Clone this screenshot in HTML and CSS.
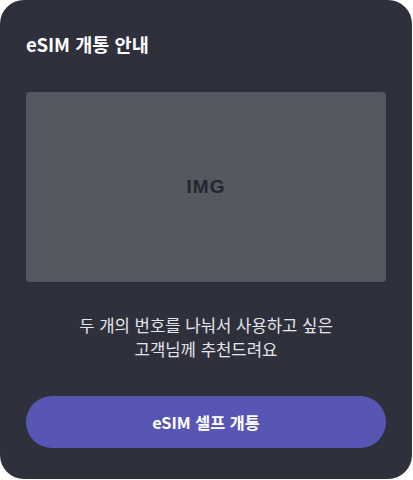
FILE: index.html
```html
<!DOCTYPE html>
<html lang="ko">
<head>
<meta charset="utf-8">
<link rel="stylesheet" href="styles.css">
</head>
<body>
<div class="card">
  <h1 class="title">eSIM 개통 안내</h1>
  <div class="img-box">IMG</div>
  <p class="desc">두 개의 번호를 나눠서 사용하고 싶은<br>고객님께 추천드려요</p>
  <button class="cta">eSIM 셀프 개통</button>
</div>
</body>
</html>
```
FILE: styles.css
```css
html, body {
  margin: 0;
  padding: 0;
  background: #ffffff;
}
body {
  font-family: "Noto Sans CJK KR", "Noto Sans", sans-serif;
}
.card {
  width: 412px;
  height: 479px;
  box-sizing: border-box;
  background: #2e303c;
  border-radius: 24px;
  padding: 31px 26px 31px 26px;
  display: flex;
  flex-direction: column;
}
.title {
  margin: 0;
  font-size: 18.6px;
  line-height: 26px;
  font-weight: 700;
  color: #ffffff;
}
.img-box {
  margin-top: 35px;
  height: 190px;
  background: #555861;
  border-radius: 4px;
  display: flex;
  align-items: center;
  justify-content: center;
  font-family: "Liberation Sans", Arial, sans-serif;
  font-weight: 700;
  font-size: 19px;
  letter-spacing: 1px;
  color: #24262e;
}
.desc {
  margin: 31px 0 0;
  text-align: center;
  font-size: 16.7px;
  line-height: 24px;
  color: #e4e4ea;
}
.cta {
  margin-top: auto;
  height: 52px;
  border: none;
  border-radius: 26px;
  background: #5856b4;
  color: #ffffff;
  font-family: inherit;
  font-size: 16.3px;
  font-weight: 700;
}
```
